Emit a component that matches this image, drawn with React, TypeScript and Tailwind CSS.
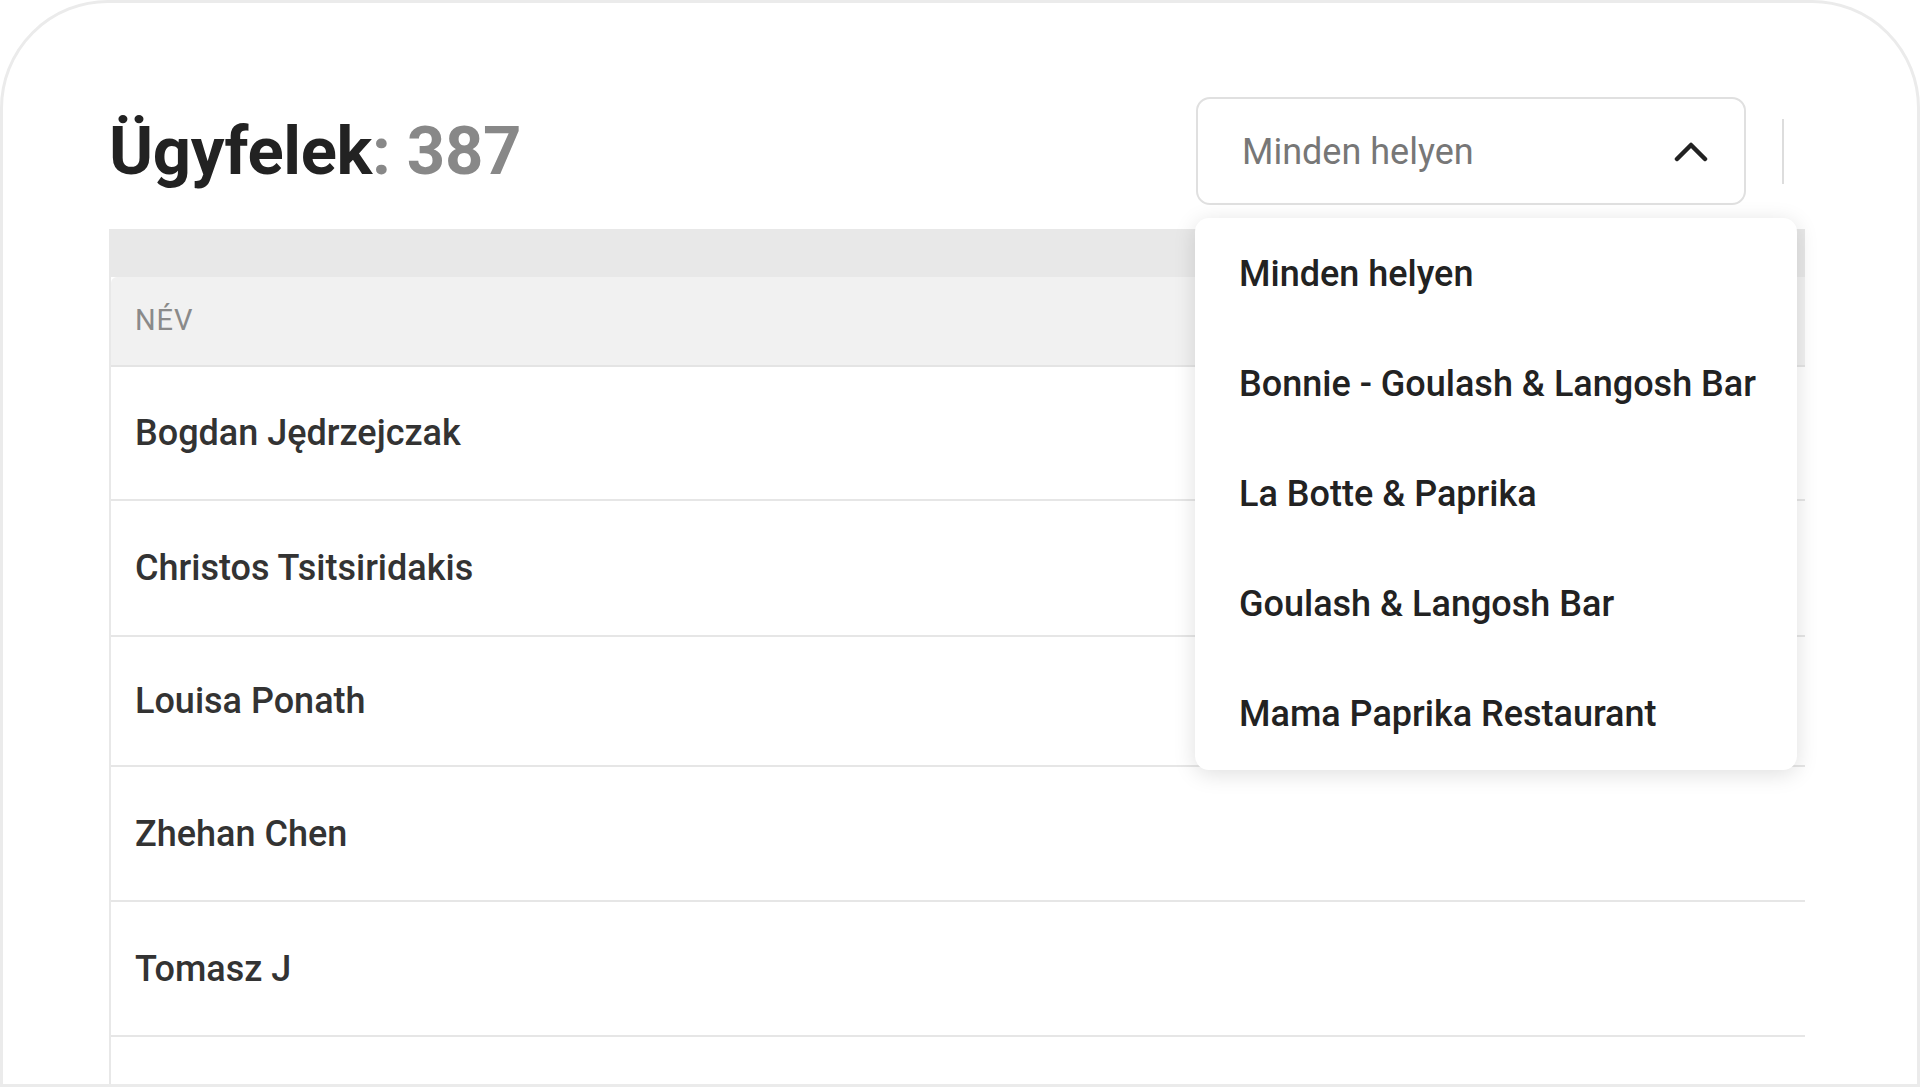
import { useState } from 'react'

const locations = [
  'Minden helyen',
  'Bonnie - Goulash & Langosh Bar',
  'La Botte & Paprika',
  'Goulash & Langosh Bar',
  'Mama Paprika Restaurant',
]

const customers = [
  { name: 'Bogdan Jędrzejczak', h: 'h-[134px]' },
  { name: 'Christos Tsitsiridakis', h: 'h-[136px]' },
  { name: 'Louisa Ponath', h: 'h-[130px]' },
  { name: 'Zhehan Chen', h: 'h-[135px]' },
  { name: 'Tomasz J', h: 'h-[135px]' },
  { name: '', h: 'h-[135px]' },
]

function ChevronUp() {
  return (
    <svg width="34" height="21" viewBox="0 0 34 21" fill="none">
      <polyline
        points="3,18 17,4 31,18"
        stroke="#222"
        strokeWidth="4.5"
        strokeLinecap="round"
        strokeLinejoin="round"
      />
    </svg>
  )
}

export default function App() {
  const [open] = useState(true)
  const [selected] = useState(locations[0])

  return (
    <div className="h-[1087px] w-full overflow-hidden bg-white" style={{ fontFamily: 'Roboto, "Liberation Sans", sans-serif' }}>
      <div className="h-[1087px] overflow-hidden rounded-t-[108px] border-[3px] border-[#ebebeb] bg-white pl-[106px] pr-[112px] pt-[94px]">

        {/* header: title + location filter */}
        <div className="flex items-center justify-between">
          <h1 className="text-[67px] font-bold leading-none tracking-[-0.005em] text-[#222]">
            Ügyfelek<span className="text-[#888]">: 387</span>
          </h1>

          <div className="flex items-center">
            <div className="relative">
              <button className="flex h-[108px] w-[550px] items-center justify-between rounded-[14px] border-2 border-[#e0e0e0] bg-white pl-[44px] pr-[36px]">
                <span className="mt-[2px] text-[36px] text-[#777]">{selected}</span>
                <ChevronUp />
              </button>

              {open && (
                <div className="absolute left-[-1px] top-[121px] z-10 w-[602px] rounded-[14px] bg-white py-[1px] shadow-[0_4px_22px_rgba(0,0,0,0.13)]">
                  {locations.map((loc) => (
                    <div key={loc} className="flex h-[110px] items-center pl-[44px] text-[36px] font-medium text-[#222]">
                      {loc}
                    </div>
                  ))}
                </div>
              )}
            </div>
            <div className="ml-[36px] mr-[21px] h-[65px] w-[2px] bg-[#dddddd]" />
          </div>
        </div>

        {/* customers table */}
        <div className="mt-[24px] border-l-2 border-[#e8e8e8]">
          <div className="h-[48px] bg-[#e8e8e8]" />
          <div className="flex h-[90px] items-center rounded-tl-[6px] border-b-2 border-[#e4e4e4] bg-[#f1f1f1] pl-[24px] text-[29px] uppercase tracking-[0.03em] text-[#8a8a8a]">
            Név
          </div>
          {customers.map((c, i) => (
            <div key={i} className={`flex ${c.h} items-center border-b-2 border-[#e6e6e6] pl-[24px] text-[36px] font-medium text-[#333]`}>
              {c.name}
            </div>
          ))}
        </div>
      </div>
    </div>
  )
}
